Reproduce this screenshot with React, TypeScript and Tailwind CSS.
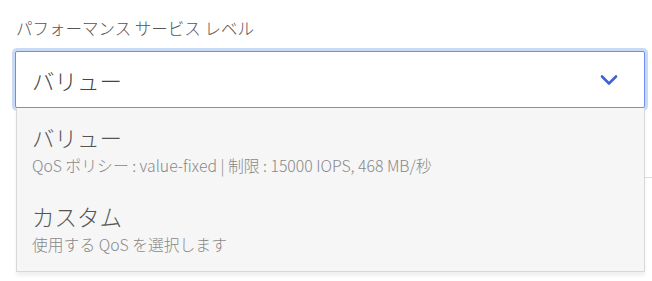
import React from 'react';

const options = [
  { title: 'バリュー', detail: 'QoS ポリシー : value-fixed | 制限 : 15000 IOPS, 468 MB/秒' },
  { title: 'カスタム', detail: '使用する QoS を選択します' },
];

function Chevron() {
  return (
    <svg width="18" height="12" viewBox="0 0 18 12" fill="none">
      <polyline points="2,2.5 9,9.5 16,2.5" stroke="#3e63d6" strokeWidth="2.6" strokeLinecap="round" strokeLinejoin="round" />
    </svg>
  );
}

export default function App() {
  return (
    <div
      className="relative w-[652px] h-[281px] overflow-hidden bg-white font-light"
      style={{ fontFamily: '"Noto Sans CJK JP", "Noto Sans", sans-serif' }}
    >
      {/* Field */}
      <div className="pt-[16px] pl-[16px] text-[16.5px] leading-[24px] text-[#555]">
        パフォーマンス サービス レベル
      </div>
      <div className="mt-[11px] ml-[15px] w-[630px] h-[57px] flex items-center justify-between rounded-[2px] border border-[#6c8fee] ring-[3px] ring-[#c8daf4] bg-white pl-[16px] pr-[26px]">
        <span className="text-[22.5px] leading-[30px] text-[#444]">バリュー</span>
        <Chevron />
      </div>

      {/* underlying divider */}
      <div className="mt-[69px] ml-[16px] border-t border-[#dedede]" />

      {/* Dropdown menu */}
      <div className="absolute left-[16px] top-[108px] w-[629px] h-[164px] bg-[#f6f6f6] border border-t-0 border-[#d8d8d8] shadow-[0_4px_3px_rgba(0,0,0,0.06)]">
        {options.map((o, i) => (
          <div key={o.title} className={i === 0 ? 'pl-[15px] pt-[14px] pb-[7px]' : 'pl-[15px] pt-[14px]'}>
            <div className="text-[22.5px] leading-[30px] text-[#555]">{o.title}</div>
            <div className="text-[15.8px] leading-[28px] text-[#888]">{o.detail}</div>
          </div>
        ))}
      </div>
    </div>
  );
}
